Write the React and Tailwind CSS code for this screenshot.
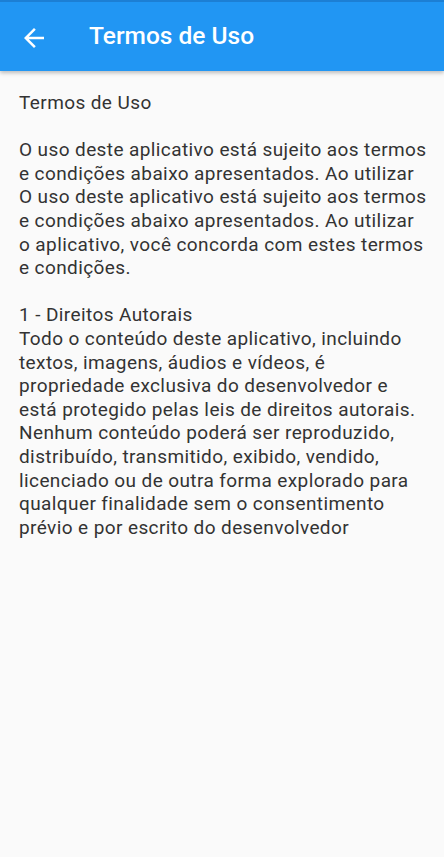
export default function App() {
  const lines = [
    "Termos de Uso",
    "",
    "O uso deste aplicativo está sujeito aos termos",
    "e condições abaixo apresentados. Ao utilizar",
    "O uso deste aplicativo está sujeito aos termos",
    "e condições abaixo apresentados. Ao utilizar",
    "o aplicativo, você concorda com estes termos",
    "e condições.",
    "",
    "1 - Direitos Autorais",
    "Todo o conteúdo deste aplicativo, incluindo",
    "textos, imagens, áudios e vídeos, é",
    "propriedade exclusiva do desenvolvedor e",
    "está protegido pelas leis de direitos autorais.",
    "Nenhum conteúdo poderá ser reproduzido,",
    "distribuído, transmitido, exibido, vendido,",
    "licenciado ou de outra forma explorado para",
    "qualquer finalidade sem o consentimento",
    "prévio e por escrito do desenvolvedor",
  ];
  return (
    <div className="w-[444px] h-[857px] bg-[#fafafa] flex flex-col overflow-hidden" style={{ fontFamily: "Roboto, sans-serif" }}>
      <div className="h-[71px] bg-[#2196f3] border-t-2 border-[#1c7fd4] flex items-center shadow-[0_2px_4px_rgba(0,0,0,0.25)] relative z-10 shrink-0">
        <div className="w-[68px] pl-[19px] pt-[2px] flex items-center">
          <svg width="30" height="30" viewBox="0 0 24 24" fill="#fff">
            <path d="M20 11H7.83l5.59-5.59L12 4l-8 8 8 8 1.41-1.41L7.83 13H20v-2z" />
          </svg>
        </div>
        <div className="pl-[21px] text-white text-[24.5px] font-medium">Termos de Uso</div>
      </div>
      <div className="pl-[19px] pr-[12px] pt-[20px] text-[19px] tracking-[0.4px] leading-[23.6px] text-[#333333] flex flex-col">
        {lines.map((l, i) => (
          <div key={i} className="h-[23.6px] whitespace-pre">{l}</div>
        ))}
      </div>
    </div>
  );
}
